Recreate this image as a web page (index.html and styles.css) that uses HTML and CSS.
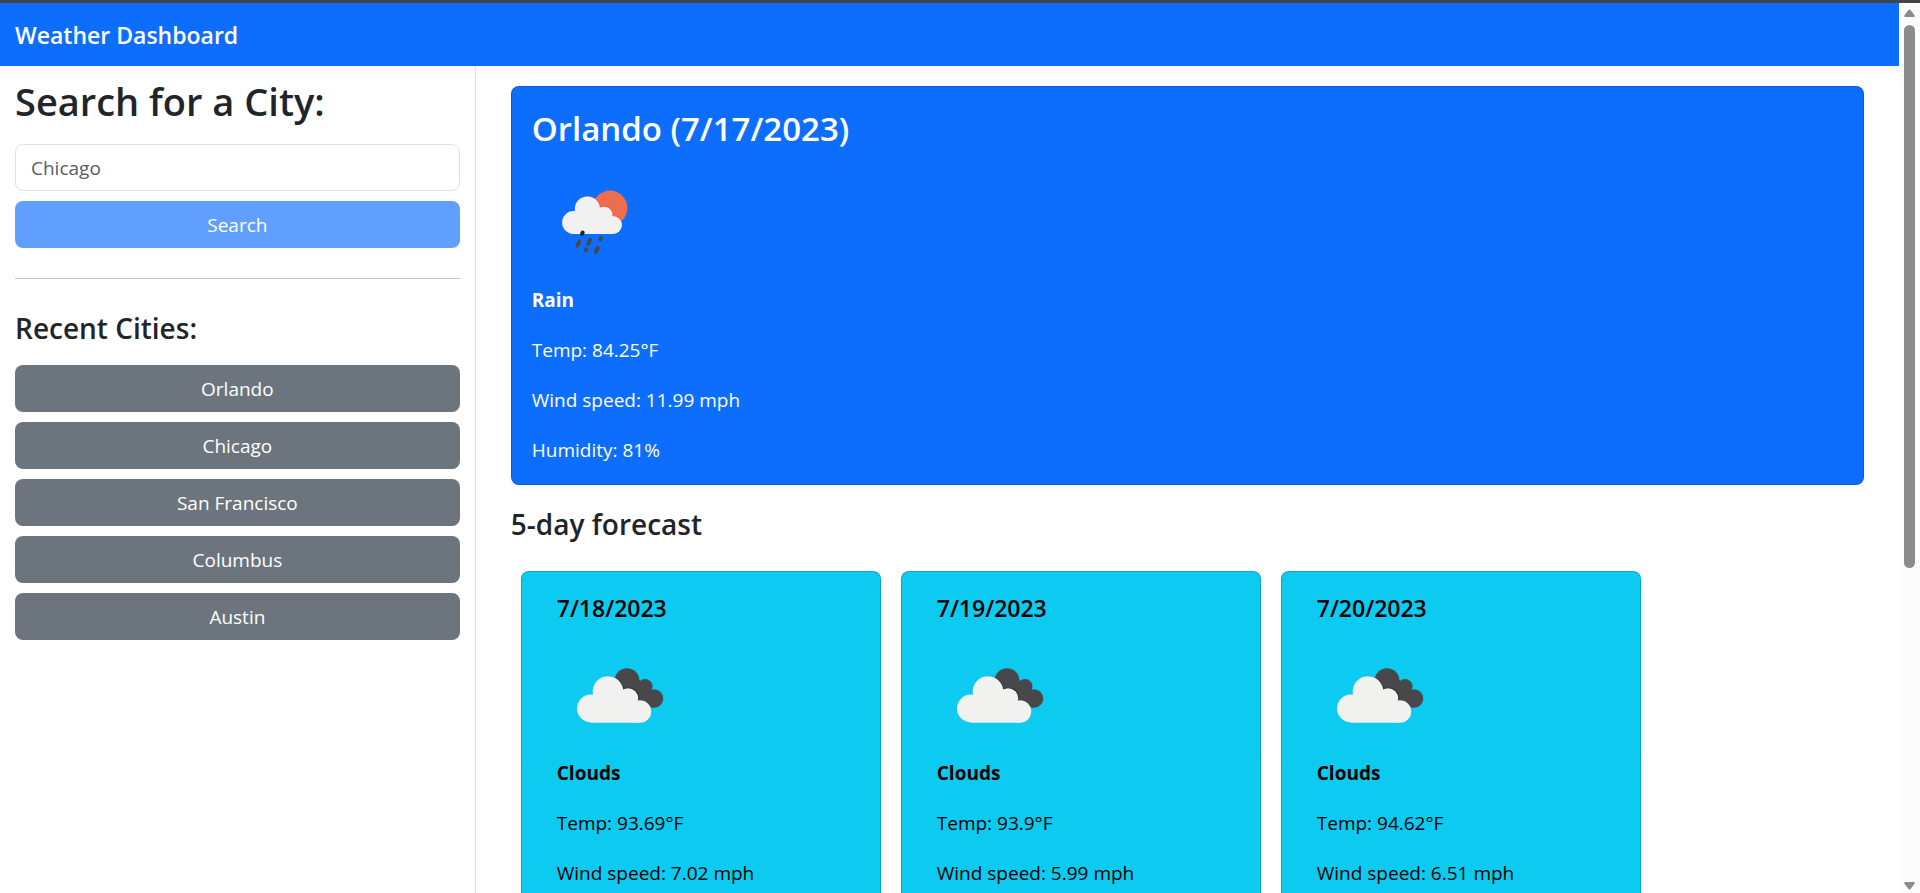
FILE: index.html
```html
<!DOCTYPE html>
<html lang="en">
<head>
<meta charset="utf-8">
<meta name="viewport" content="width=device-width, initial-scale=1">
<title>Weather Dashboard</title>
<link rel="stylesheet" href="styles.css">
</head>
<body>
<svg class="defs" aria-hidden="true">
  <symbol id="icon-clouds" viewBox="0 0 125 125">
    <g fill="#48484a">
      <circle cx="70" cy="48" r="12.3"/>
      <circle cx="88" cy="54" r="7.5"/>
      <circle cx="97" cy="66" r="9.3"/>
      <path d="M62 55 81 45 90 60 97 75 80 75Z"/>
    </g>
    <g fill="#2f2f31">
      <circle cx="52" cy="59.300" r="15.300"/>
      <circle cx="71.500" cy="65.600" r="10.600"/>
      <path d="M72 79a11.8 11.8 0 0 1 19-9l-4 9z"/>
    </g>
    <g fill="#f1f1f0">
      <circle cx="33.900" cy="76" r="13.900"/>
      <circle cx="51" cy="59" r="15.300"/>
      <circle cx="71" cy="66" r="10.200"/>
      <circle cx="83" cy="79" r="11.200"/>
      <path d="M34 64 50 50 70 62 84 80 83 90.200H34Z"/>
    </g>
  </symbol>
  <symbol id="icon-rain" viewBox="0 0 125 125">
    <circle cx="78" cy="48.500" r="17.400" fill="#ec6e4c"/>
    <g fill="#f1512f">
      <circle cx="56" cy="49.700" r="12.600"/>
      <circle cx="72.300" cy="55.300" r="9"/>
      <path d="M72 66a9.700 9.700 0 0 1 17-6l-6 8z"/>
    </g>
    <g fill="#f1f1f2">
      <circle cx="41.500" cy="63" r="11.400"/>
      <circle cx="55.400" cy="49.500" r="12.600"/>
      <circle cx="72" cy="55.500" r="8.600"/>
      <circle cx="81" cy="65.500" r="9"/>
      <path d="M42 54 54 40 72 52 82 66 81 74.400H41.500Z"/>
    </g>
    <g stroke="#484848" stroke-width="4" stroke-linecap="round">
      <path d="M50.700 73 50 74.500" stroke="#222"/>
      <path d="M47.200 82 45.400 86M58 80.300 56.200 84.300M69 78.600 68.500 79.800M54.300 89.800 53.900 90.600M65.600 88.400 63.800 92.400"/>
    </g>
  </symbol>
</svg>

<div class="window">
  <div class="page">
    <header class="navbar"><span class="navbar-brand">Weather Dashboard</span></header>
    <div class="columns">
      <aside class="sidebar">
        <form class="search">
          <h1 class="search-title"><label for="city">Search for a City:</label></h1>
          <input class="search-input" id="city" type="text" placeholder="Chicago">
          <button class="btn btn-primary" type="button">Search</button>
        </form>
        <hr class="divider">
        <h2 class="heading">Recent Cities:</h2>
        <div class="recent">
          <button class="btn" type="button">Orlando</button>
          <button class="btn" type="button">Chicago</button>
          <button class="btn" type="button">San Francisco</button>
          <button class="btn" type="button">Columbus</button>
          <button class="btn" type="button">Austin</button>
        </div>
      </aside>
      <main class="main">
        <section class="card current">
          <h2 class="current-title">Orlando (7/17/2023)</h2>
          <svg class="icon" role="img" aria-label="Rain"><use href="#icon-rain"/></svg>
          <div class="details">
            <strong>Rain</strong>
            <span>Temp: 84.25°F</span>
            <span>Wind speed: 11.99 mph</span>
            <span>Humidity: 81%</span>
          </div>
        </section>
        <h2 class="heading">5-day forecast</h2>
        <section class="forecast">
          <article class="card day">
            <h3 class="day-title">7/18/2023</h3>
            <svg class="icon" role="img" aria-label="Clouds"><use href="#icon-clouds"/></svg>
            <div class="details">
              <strong>Clouds</strong>
              <span>Temp: 93.69°F</span>
              <span>Wind speed: 7.02 mph</span>
            </div>
          </article>
          <article class="card day">
            <h3 class="day-title">7/19/2023</h3>
            <svg class="icon" role="img" aria-label="Clouds"><use href="#icon-clouds"/></svg>
            <div class="details">
              <strong>Clouds</strong>
              <span>Temp: 93.9°F</span>
              <span>Wind speed: 5.99 mph</span>
            </div>
          </article>
          <article class="card day">
            <h3 class="day-title">7/20/2023</h3>
            <svg class="icon" role="img" aria-label="Clouds"><use href="#icon-clouds"/></svg>
            <div class="details">
              <strong>Clouds</strong>
              <span>Temp: 94.62°F</span>
              <span>Wind speed: 6.51 mph</span>
            </div>
          </article>
        </section>
      </main>
    </div>
  </div>
  <div class="scrollbar" aria-hidden="true">
    <svg class="arrow" viewBox="0 0 11 8"><path d="M4.500 1Q5.500 0 6.500 1L10.700 6.500Q11 8 9.800 8H1.200Q0 8 .3 6.500Z"/></svg>
    <div class="track"><div class="thumb"></div></div>
    <svg class="arrow" viewBox="0 0 11 8"><path d="M4.500 7Q5.500 8 6.500 7L10.700 1.500Q11 0 9.800 0H1.200Q0 0 .3 1.500Z"/></svg>
  </div>
</div>
</body>
</html>
```
FILE: styles.css
```css
* {
  box-sizing: border-box;
}

body {
  margin: 0;
  background: #fff;
  color: #212529;
  font-family: "Open Sans", "Noto Sans", sans-serif;
  font-size: 19px;
  line-height: 30px;
}

h1,
h2,
h3 {
  margin: 0;
  font-weight: 600;
}

.defs {
  display: none;
}

.window {
  display: flex;
  height: 100vh;
  overflow: hidden;
  border-top: 3px solid #434343;
}

.page {
  flex: 1;
  display: flex;
  flex-direction: column;
  min-width: 0;
}

.navbar {
  display: flex;
  align-items: center;
  padding: 17px 15px 16px;
  background: #0d6efd;
  color: #fff;
}

.navbar-brand {
  font-size: 23px;
  font-weight: 600;
}

.columns {
  flex: 1;
  display: grid;
  grid-template-columns: 1fr 3fr;
}

.sidebar {
  padding: 12px 15px;
}

.search {
  display: flex;
  flex-direction: column;
  gap: 10px;
}

.search-title {
  padding-bottom: 10px;
  font-size: 38px;
  line-height: 46px;
}

.search-input {
  width: 100%;
  height: 47px;
  padding: 0 15px;
  border: 1px solid #dee2e6;
  border-radius: 8px;
  background: #fff;
  color: #212529;
  font: inherit;
}

.search-input::placeholder {
  color: #595c5f;
  opacity: 1;
}

.btn {
  width: 100%;
  height: 47px;
  padding: 0 15px;
  border: 0;
  border-radius: 8px;
  background: #6c757d;
  color: #fff;
  font: inherit;
}

.btn-primary {
  background: #619fff;
}

.divider {
  height: 1px;
  margin: 30px 0;
  border: 0;
  background: #c7c8c9;
}

.heading {
  font-size: 28px;
  line-height: 38px;
}

.recent {
  display: flex;
  flex-direction: column;
  gap: 10px;
  padding-top: 18px;
}

.main {
  display: flex;
  flex-direction: column;
  gap: 20px;
  padding: 20px 35px 0;
  border-left: 1px solid #dee2e6;
}

.card {
  border: 1px solid rgba(0, 0, 0, 0.176);
  border-radius: 8px;
}

.current {
  padding: 20px 20px 19px;
  background: #0d6efd;
  color: #fff;
}

.current-title {
  padding-bottom: 8px;
  font-size: 33px;
  line-height: 44px;
}

.icon {
  display: block;
  width: 125px;
  height: 126px;
}

.details {
  display: flex;
  flex-direction: column;
  gap: 20px;
}

.forecast {
  flex: 1;
  display: grid;
  grid-template-columns: repeat(auto-fill, 360px);
  gap: 20px;
  padding: 8px 10px 0;
}

.day {
  padding: 20px 35px 0;
  border-bottom: 0;
  border-radius: 8px 8px 0 0;
  background: #0dcaf0;
  color: #000;
}

.day-title {
  padding-bottom: 8px;
  font-size: 23px;
  line-height: 32px;
}

.scrollbar {
  display: flex;
  flex-direction: column;
  gap: 8px;
  width: 21px;
  padding: 6px 5px 3px;
  background: #fcfcfc;
}

.arrow {
  width: 11px;
  height: 8px;
  fill: #8b8b8b;
}

.track {
  flex: 1;
}

.thumb {
  height: 64%;
  border-radius: 6px;
  background: #8b8b8b;
}
```
